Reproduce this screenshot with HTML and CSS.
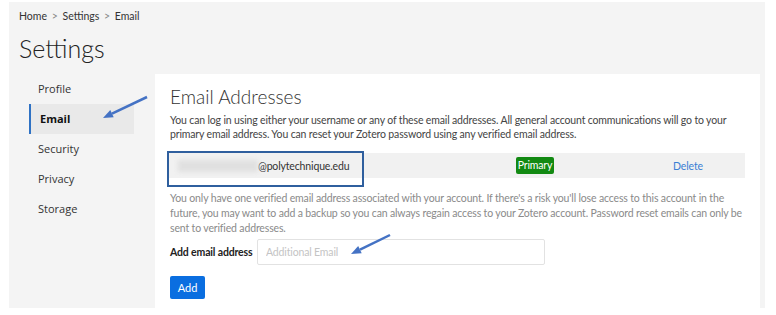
FILE: index.html
```html
<!DOCTYPE html>
<html lang="en">
<head>
    <meta charset="UTF-8">
    <title>Settings - Email</title>
    <link rel="stylesheet" href="styles.css">
</head>
<body>
    <div class="page">
        <nav class="crumbs">Home <span>&gt;</span> Settings <span>&gt;</span> Email</nav>
        <h1>Settings</h1>
        <div class="layout">
            <ul class="side">
                <li>Profile</li>
                <li class="active">Email</li>
                <li>Security</li>
                <li>Privacy</li>
                <li>Storage</li>
            </ul>
            <main class="card">
                <h2>Email Addresses</h2>
                <p class="intro">You can log in using either your username or any of these email addresses. All general account communications will go to your primary email address. You can reset your Zotero password using any verified email address.</p>
                <div class="email-row">
                    <div class="address"><span class="blurred"></span>@polytechnique.edu</div>
                    <div class="status"><span class="badge">Primary</span></div>
                    <div class="action"><a href="#">Delete</a></div>
                </div>
                <p class="note">You only have one verified email address associated with your account. If there's a risk you'll lose access to this account in the future, you may want to add a backup so you can always regain access to your Zotero account. Password reset emails can only be sent to verified addresses.</p>
                <form class="add-form">
                    <label for="new-email">Add email address</label>
                    <input id="new-email" type="text" placeholder="Additional Email">
                </form>
                <button class="add-btn">Add</button>
            </main>
        </div>
    </div>

    <!-- annotation arrows drawn over the screenshot -->
    <svg class="arrows" width="776" height="315" viewBox="0 0 776 315">
        <line x1="147" y1="97" x2="112" y2="113.7" />
        <polygon points="103,118 113.7,117.3 110.3,110.1" />
        <line x1="390" y1="235" x2="360" y2="249.6" />
        <polygon points="351,254 361.7,253.2 358.2,246" />
    </svg>
</body>
</html>
```

FILE: styles.css
```css
* {
    margin: 0;
    padding: 0;
    box-sizing: border-box;
}
body {
    position: relative;
    background: #fff;
    padding: 2px 11px 7px 9px;
    font-family: 'Lato', 'Open Sans', sans-serif;
    color: #333;
}
.page {
    background: #f4f4f4;
    height: 306px;
    padding: 0 5px 0 10px;
    display: flex;
    flex-direction: column;
    overflow: hidden;
}
.crumbs {
    font-size: 10.5px;
    line-height: 14px;
    margin-top: 7px;
    color: #333;
}
.crumbs span {
    color: #888;
    margin: 0 2px;
}
h1 {
    font-size: 25px;
    font-weight: 300;
    line-height: 30px;
    margin-top: 10px;
    color: #222;
}
.layout {
    display: flex;
    flex: 1;
    margin-top: 11px;
    margin-left: -10px;
}
.side {
    list-style: none;
    width: 146px;
    padding: 0 21px 0 20px;
    font-family: 'Open Sans', sans-serif;
    font-size: 11px;
}
.side li {
    height: 30px;
    line-height: 30px;
    padding-left: 7px;
    border-left: 2px solid transparent;
    color: #333;
}
.side li.active {
    background: #e9e9e9;
    border-left-color: #2f72c4;
    font-weight: bold;
    color: #111;
    padding-left: 9px;
}
.card {
    flex: 1;
    background: #fff;
    padding: 11px 15px 0 12px;
}
.card h2 {
    font-size: 19px;
    font-weight: 300;
    line-height: 24px;
    color: #333;
    padding-left: 3px;
}
.intro,
.note,
.email-row,
.add-form label,
.add-form input {
    font-size: 10.5px;
    letter-spacing: -0.15px;
}
.intro {
    line-height: 14px;
    color: #444;
    padding-left: 3px;
    margin-top: 4px;
}
.email-row {
    display: grid;
    grid-template-columns: 272px 192px 1fr;
    align-items: center;
    height: 25px;
    margin-top: 12px;
    background: #f1f1f1;
}
.address {
    position: relative;
    display: flex;
    align-items: center;
    padding-left: 11px;
    color: #333;
}
.address::after {
    content: "";
    position: absolute;
    left: 0;
    top: -9px;
    width: 193px;
    height: 32px;
    border: 2px solid #2f5f9e;
}
.blurred {
    display: inline-block;
    width: 80px;
    height: 12px;
    background: #e0e0e0;
    filter: blur(2px);
}
.status,
.action {
    text-align: center;
}
.badge {
    display: inline-block;
    background: #138a13;
    color: #fff;
    padding: 0 2px;
    line-height: 17px;
    border-radius: 2px;
}
.action a {
    color: #3b7fd4;
    text-decoration: none;
}
.note {
    line-height: 15px;
    color: #8a8a8a;
    padding-left: 3px;
    margin-top: 13px;
}
.add-form {
    display: flex;
    align-items: center;
    margin-top: 3px;
    padding-left: 3px;
}
.add-form label {
    font-weight: bold;
    color: #222;
    width: 87px;
    white-space: nowrap;
}
.add-form input {
    width: 288px;
    height: 26px;
    border: 1px solid #e2e2e2;
    border-radius: 2px;
    padding-left: 8px;
    font-family: inherit;
}
.add-form input::placeholder {
    color: #c4c4c4;
}
.add-btn {
    margin: 11px 0 0 3px;
    width: 35px;
    height: 23px;
    background: #0a6ee0;
    color: #fff;
    border: none;
    border-radius: 2px;
    font-family: inherit;
    font-size: 11px;
}
.arrows {
    position: absolute;
    left: 0;
    top: 0;
    pointer-events: none;
}
.arrows line {
    stroke: #4472c4;
    stroke-width: 2.5;
}
.arrows polygon {
    fill: #4472c4;
}
```
